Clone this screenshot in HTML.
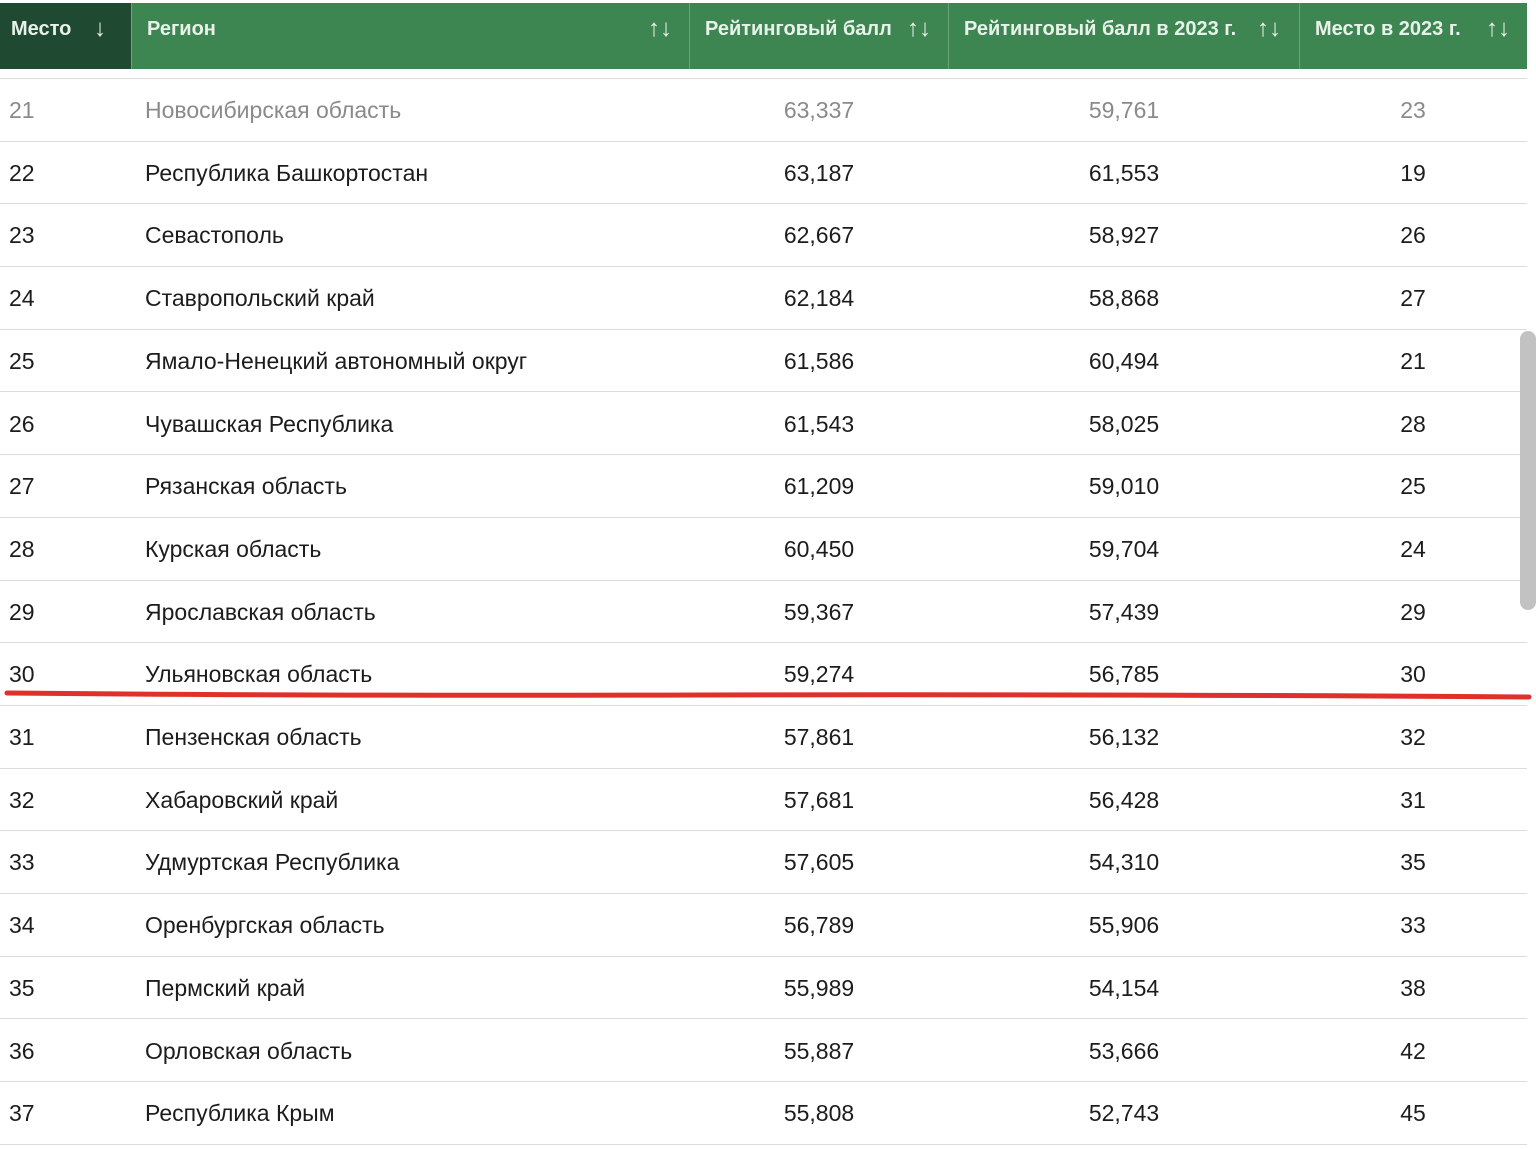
<!DOCTYPE html>
<html><head><meta charset="utf-8">
<style>
*{margin:0;padding:0;box-sizing:border-box}
body{width:1536px;height:1149px;background:#fff;position:relative;overflow:hidden;font-family:"Liberation Sans",Arial,sans-serif;color:#1c1c1c}
.hdr{position:absolute;top:3px;height:66px;left:0;width:1527px;background:#3e8651}
.hc{position:absolute;top:3px;height:66px;color:#e8f2ea;font-size:20px;font-weight:bold;line-height:52px;border-left:1px solid #6aa57a}
.hc span.a{position:absolute;font-weight:normal;font-size:24px}
.row{position:absolute;left:0;width:1527px;height:62.7px;border-bottom:1px solid #dcdcdc;font-size:23px}
.row div{position:absolute;top:0;line-height:62px}
.c1{left:9px}.c2{left:145px}
.c3{left:719px;width:200px;text-align:center}
.c4{left:1024px;width:200px;text-align:center}
.c5{left:1313px;width:200px;text-align:center}
</style></head><body>
<div class="hdr"></div>
<div class="hc" style="left:0;width:131px;background:#1f4a31;border-left:none;padding-left:11px">Место<span class="a" style="left:94px">↓</span></div>
<div class="hc" style="left:131px;width:558px;padding-left:15px">Регион<span class="a" style="left:516px">↑↓</span></div>
<div class="hc" style="left:689px;width:259px;padding-left:15px">Рейтинговый балл<span class="a" style="left:217px">↑↓</span></div>
<div class="hc" style="left:948px;width:351px;padding-left:15px">Рейтинговый балл в 2023 г.<span class="a" style="left:308px">↑↓</span></div>
<div class="hc" style="left:1299px;width:228px;padding-left:15px">Место в 2023 г.<span class="a" style="left:186px">↑↓</span></div>
<div style="position:absolute;left:0;top:78px;width:1527px;height:1px;background:#dcdcdc"></div>
<div id="rows"></div>
<div style="position:absolute;left:1520px;top:331px;width:16px;height:279px;background:#c2c2c2;border-radius:8px"></div>
<svg style="position:absolute;left:0;top:0" width="1536" height="1149"><path d="M7 693 Q300 696 700 695 T1529 697" stroke="#e0302a" stroke-width="5" fill="none" stroke-linecap="round"/></svg>
<script>
var d=[["21","Новосибирская область","63,337","59,761","23"],["22","Республика Башкортостан","63,187","61,553","19"],["23","Севастополь","62,667","58,927","26"],["24","Ставропольский край","62,184","58,868","27"],["25","Ямало-Ненецкий автономный округ","61,586","60,494","21"],["26","Чувашская Республика","61,543","58,025","28"],["27","Рязанская область","61,209","59,010","25"],["28","Курская область","60,450","59,704","24"],["29","Ярославская область","59,367","57,439","29"],["30","Ульяновская область","59,274","56,785","30"],["31","Пензенская область","57,861","56,132","32"],["32","Хабаровский край","57,681","56,428","31"],["33","Удмуртская Республика","57,605","54,310","35"],["34","Оренбургская область","56,789","55,906","33"],["35","Пермский край","55,989","54,154","38"],["36","Орловская область","55,887","53,666","42"],["37","Республика Крым","55,808","52,743","45"]];
var h="";d.forEach(function(r,i){h+='<div class="row" style="top:'+(79+i*62.7)+'px;'+(i==0?'color:#8a8a8a':'')+'"><div class="c1">'+r[0]+'</div><div class="c2">'+r[1]+'</div><div class="c3">'+r[2]+'</div><div class="c4">'+r[3]+'</div><div class="c5">'+r[4]+'</div></div>';});
document.getElementById("rows").innerHTML=h;
</script>
</body></html>
